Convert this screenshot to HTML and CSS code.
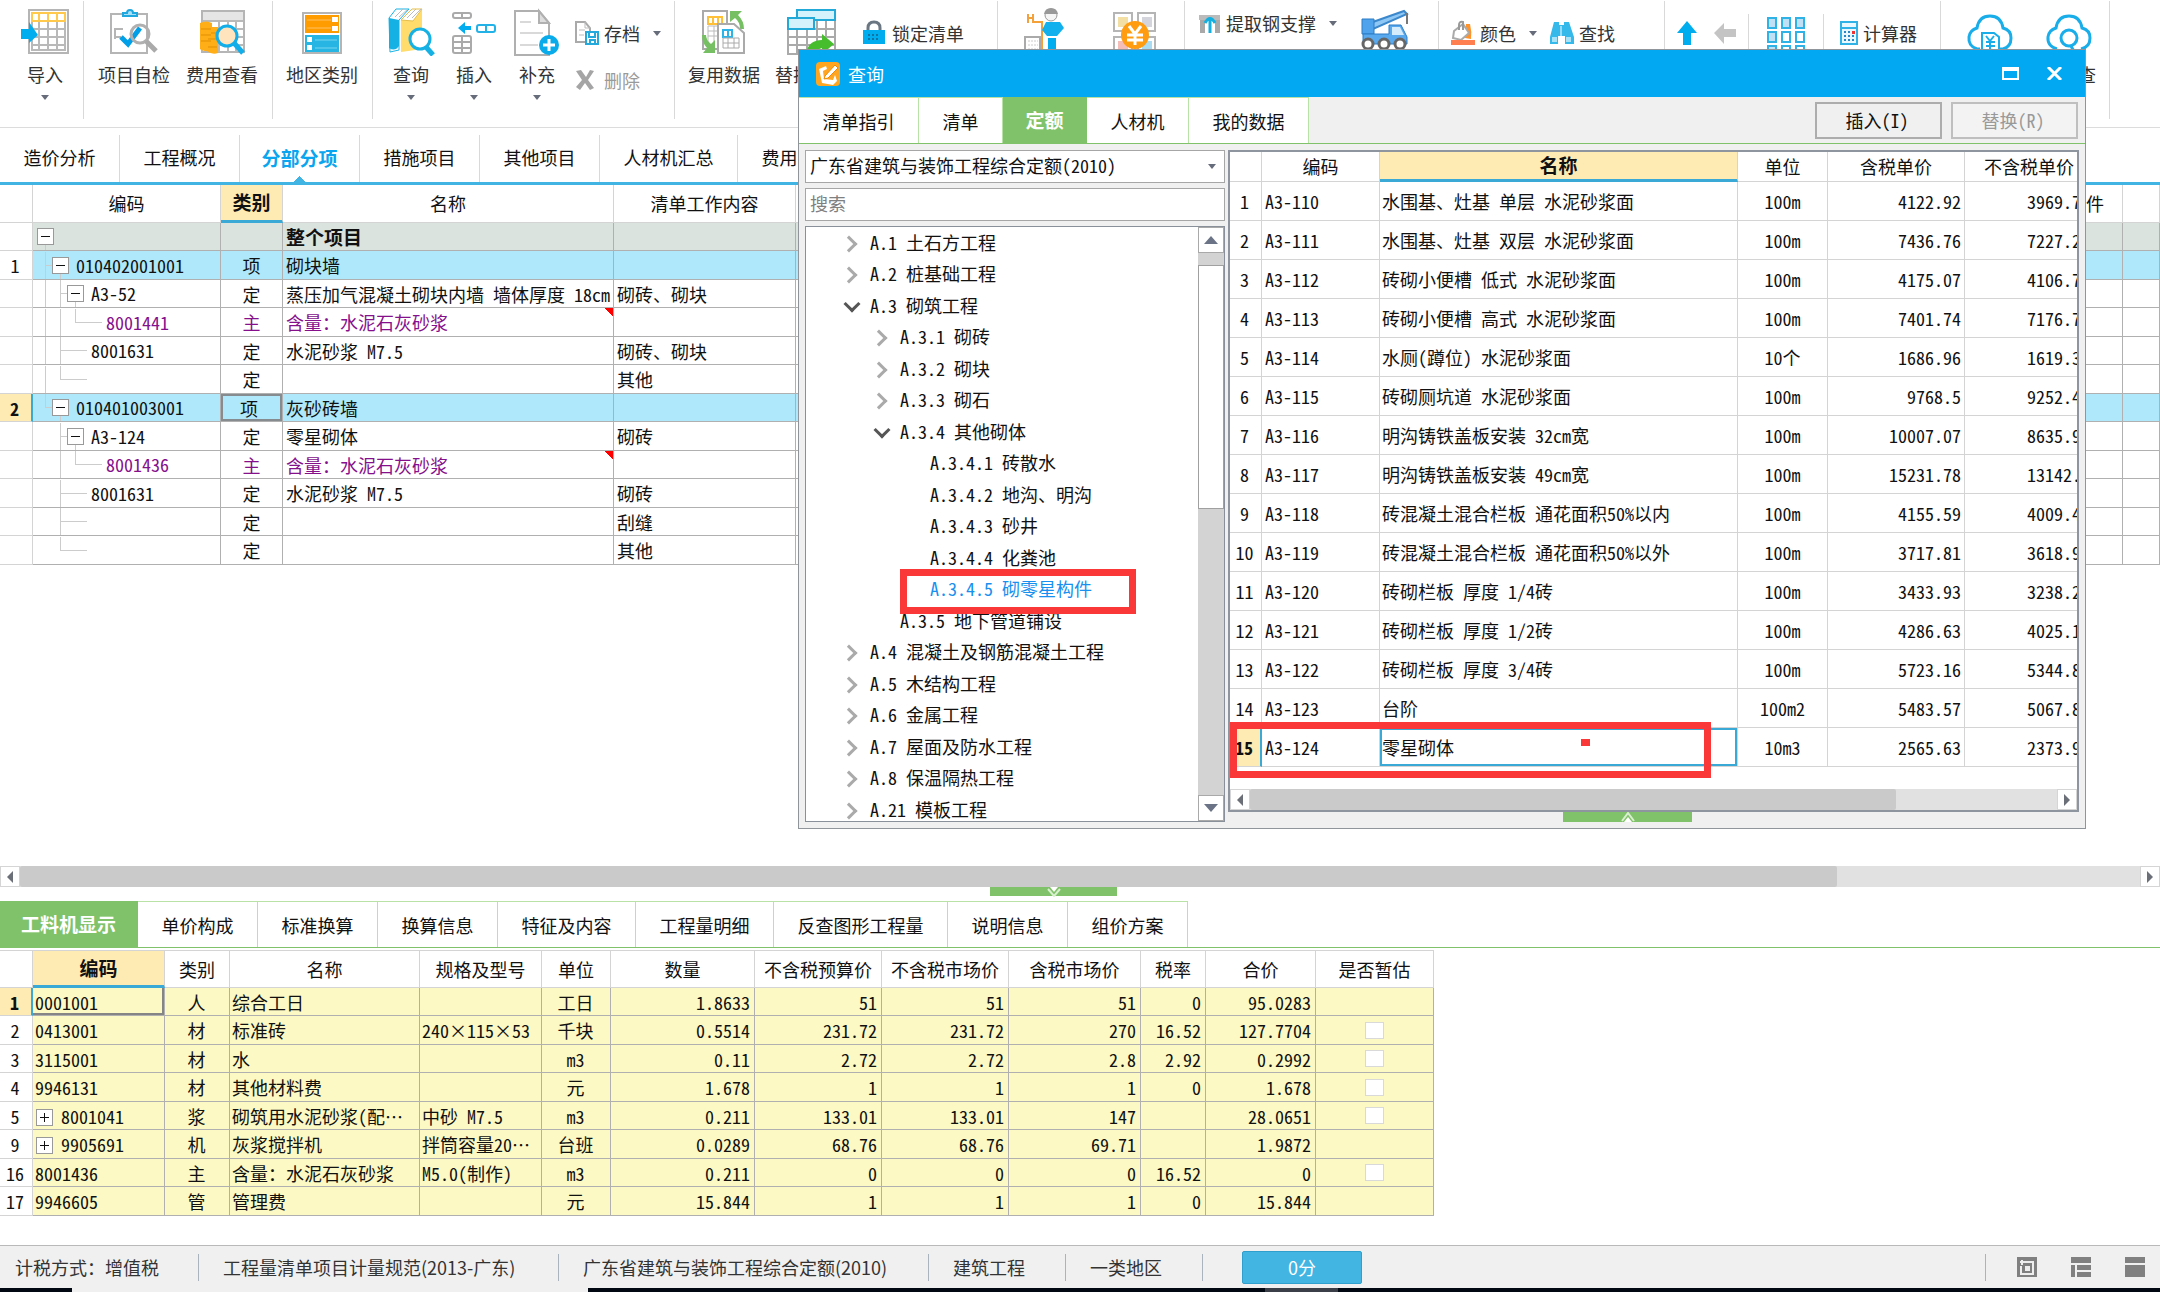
FILE: index.html
```html
<!DOCTYPE html>
<html lang="zh-CN">
<head>
<meta charset="utf-8">
<title>分部分项</title>
<link rel="stylesheet" href="styles.css">
</head>
<body>
<header class="toolbar">
  <div class="group g-import">
    <button class="tool narrow"><svg width="50" height="46" viewBox="0 0 50 46"><rect x="9" y="1" width="39" height="43" fill="#fff" stroke="#b5b5b5" stroke-width="2"/><path d="M12 12h33M12 20h33M12 28h33M12 36h33M19 12v29M28 12v29M37 12v29M12 12v29h33V12" fill="none" stroke="#b9b9b9" stroke-width="2"/><path d="M12 4h33v8H12zM19 4v8M28 4v8M37 4v8" fill="#fff" stroke="#ffc94d" stroke-width="2"/><path d="M1 20h8v-7l9 13-9 8v-4H1z" fill="#00aeef"/></svg><span>导入</span><i class="caret"></i></button>
  </div>
  <div class="group g-check">
    <button class="tool"><svg width="50" height="46" viewBox="0 0 50 46"><rect x="2" y="5" width="36" height="39" fill="#fff" stroke="#b5b5b5" stroke-width="2"/><path d="M14 7v-3h4a3 3 0 0 1 6 0h4v3z" fill="#a8e0f7" stroke="#1fa8e0" stroke-width="2"/><path d="M14 20H6v8h6M6 20v10" fill="none" stroke="#b5b5b5" stroke-width="2"/><path d="M12 28l7 7L31 19" fill="none" stroke="#009fe8" stroke-width="5"/><circle cx="31" cy="25" r="9" fill="none" stroke="#b0b0b0" stroke-width="3"/><path d="M37 32l10 10" stroke="#aaa" stroke-width="5"/></svg><span>项目自检</span></button>
    <button class="tool"><svg width="50" height="46" viewBox="0 0 50 46"><rect x="5" y="2" width="42" height="41" fill="#fff" stroke="#b5b5b5" stroke-width="2"/><path d="M6 3h40v8H6z" fill="#e4e5e4"/><path d="M6 12h40M14 20h32M14 28h32M14 36h32M22 12v31M31 12v31M39 12v31" stroke="#b9b9b9" stroke-width="2"/><path d="M3 14q6-3 12 0v4h6v26q-6 2-11-2-5 0-7-2z" fill="#ffae18"/><path d="M4 20h10M4 26h10M4 32h10M11 38h9M11 30h9M14 24h6" stroke="#e38f00" stroke-width="1"/><circle cx="30" cy="27" r="10" fill="#ffe4bd" stroke="#12aeea" stroke-width="3"/><path d="M37 34l9 10" stroke="#12aeea" stroke-width="5"/></svg><span>费用查看</span></button>
  </div>
  <div class="group g-region">
    <button class="tool"><svg width="42" height="46" viewBox="0 0 42 46"><rect x="2" y="4" width="38" height="40" fill="#fff" stroke="#b5b5b5" stroke-width="2"/><path d="M4 6h34v18H4z" fill="#ff9c00"/><path d="M6 11h24M6 19h24" stroke="#ffc163"/><path d="M31 8h6v5h-6zM31 17h6v5h-6z" fill="#fff"/><path d="M4 26h34v17H4z" fill="#27b5e4"/><path d="M14 31h22M14 39h22" stroke="#7ad5f0"/><path d="M6 28h5v5H6zM6 36h5v5H6z" fill="#fff"/></svg><span>地区类别</span></button>
  </div>
  <div class="group g-edit">
    <button class="tool narrow"><svg width="48" height="48" viewBox="0 0 48 48"><path d="M2 10L9 1h13L12 12v30l-9 2z" fill="#fff" stroke="#19b3e6"/><path d="M2 10l10 2v26q-4 6-10 2z" fill="#15b1e5"/><path d="M14 12L25 1h10v32l-7 9-14 2z" fill="#ffdc6b"/><path d="M14 12L25 1h10L26 13z" fill="#fff" stroke="#e4bf4b"/><path d="M12 9l9-8M8 9l8-8M20 10l9-9M25 10l9-9" stroke="#bbb"/><circle cx="33" cy="31" r="10" fill="#fff" stroke="#15b1e5" stroke-width="3"/><path d="M39 39l7 8" stroke="#15b1e5" stroke-width="5"/></svg><span>查询</span><i class="caret"></i></button>
    <button class="tool narrow"><svg width="48" height="48" viewBox="0 0 48 48"><g fill="#fff" stroke="#aaa" stroke-width="2"><rect x="3" y="5" width="18" height="5" rx="2"/><path d="M12 5v5"/><rect x="3" y="28" width="18" height="17" rx="2"/><path d="M3 34h18M3 40h18M12 28v17"/></g><path d="M21 18h-6v-4l-7 6 7 6v-4h6z" fill="#00aeef"/><rect x="27" y="17" width="18" height="7" rx="2" fill="#fff" stroke="#22b2e8" stroke-width="2"/><path d="M36 17v7" stroke="#22b2e8" stroke-width="2"/></svg><span>插入</span><i class="caret"></i></button>
    <button class="tool narrow"><svg width="48" height="48" viewBox="0 0 48 48"><path d="M2 3h24l10 12v32H2z" fill="#fff" stroke="#b0b0b0" stroke-width="2"/><path d="M26 3v12h10z" fill="#ddd" stroke="#b0b0b0" stroke-width="2"/><path d="M7 14h11M7 25h23M7 37h18" stroke="#d9d9d9" stroke-width="2"/><circle cx="36" cy="37" r="10" fill="#0aabea"/><path d="M30 37h12M36 31v12" stroke="#fff" stroke-width="3"/></svg><span>补充</span><i class="caret"></i></button>
    <div class="stack">
      <button class="small"><svg width="26" height="26" viewBox="0 0 26 26"><path d="M2 2h9l5 6v14H2z" fill="#fff" stroke="#aaa" stroke-width="2"/><path d="M11 2v6h5M5 10h6M5 15h5" fill="none" stroke="#bbb"/><path d="M12 12h12v12H12z" fill="#fff" stroke="#24a9dd" stroke-width="2"/><path d="M15 12v5h6v-5M16 24v-4h5v4" fill="none" stroke="#24a9dd" stroke-width="2"/></svg><span>存档</span><i class="caret"></i></button>
      <button class="small" disabled><svg width="26" height="26" viewBox="0 0 26 26"><path d="M2 4l5-1 5 7 4-7 4 1-6 9 6 8-4 2-5-7-5 7-4-3 6-7z" fill="#a5a5a5"/></svg><span>删除</span></button>
    </div>
  </div>
  <div class="group g-reuse">
    <button class="tool"><svg width="48" height="46" viewBox="0 0 48 46"><path d="M3 2h24v38H3z" fill="#fff" stroke="#aaa" stroke-width="2"/><path d="M8 8h14v7H8zM13 8v7M18 8v7" fill="none" stroke="#ffc038" stroke-width="2"/><path d="M8 17h14M8 22h12M8 27h12M8 17v16M14 17v16" stroke="#bbb"/><path d="M30 2h12l-4 4q6 6 6 14h-4q0-7-5-11l-5 4z" fill="#76bf62"/><path d="M2 26h4q0 5 5 9l4-4v13H3l4-5q-5-5-5-13z" fill="#76bf62"/><path d="M18 15h16l10 9v20H18z" fill="#fff" stroke="#aaa" stroke-width="2"/><path d="M23 21h9v7h-9zM28 21v7" fill="none" stroke="#2bb4e8" stroke-width="2"/><path d="M23 29h16v10H23zM23 34h16M28 29v10M34 29v10" fill="none" stroke="#aaa"/></svg><span>复用数据</span></button>
    <button class="tool"><svg width="50" height="46" viewBox="0 0 50 46"><path d="M2 28h47M2 36h47M2 20h47M2 14v31h24M11 20v25M21 20v25M31 12v30M40 12v30M49 12v30" fill="none" stroke="#aaa" stroke-width="2"/><path d="M11 1h38v10H11z" fill="#d4f2fb" stroke="#22a9d8" stroke-width="2"/><path d="M2 9h26v11H2z" fill="#d4f2fb" stroke="#22a9d8" stroke-width="2"/><path d="M20 45q2-14 16-14v-6l12 10-12 10v-6z" fill="#46bd2d"/></svg><span>替换数据</span></button>
    <button class="small lock"><svg width="26" height="26" viewBox="0 0 26 26"><path d="M6 12V8q0-6 6-6t6 6v4" fill="none" stroke="#6b7683" stroke-width="3"/><path d="M1 10h22v14H1z" fill="#00aeef"/><path d="M6 15h12M6 19h12" stroke="#1075a5" stroke-width="2" stroke-dasharray="2 2"/></svg><span>锁定清单</span></button>
  </div>
  <div class="group g-person">
    <button class="tool"><svg width="46" height="48" viewBox="0 0 46 48"><path d="M4 6v9M9 6v9M4 10h5" stroke="#f5a13a" stroke-width="2"/><path d="M10 14h8v8h8M18 20v24h-6" fill="none" stroke="#f5a13a" stroke-width="2"/><circle cx="27" cy="7" r="6" fill="#f5f5f5" stroke="#999"/><path d="M20 6q1-6 7-6t7 6z" fill="#999"/><path d="M22 14h14l4 6-7 8H23l-5-6z" fill="#12b0ed"/><path d="M24 30h8v13h6l-8 5-8-5h2z" fill="#00aeef"/><path d="M1 29h15v19H1z" fill="#fff" stroke="#aaa" stroke-width="2"/><path d="M4 33h10M4 37h10M4 41h10" stroke="#ccc" stroke-dasharray="2 1"/></svg></button>
    <button class="tool"><svg width="46" height="48" viewBox="0 0 46 48"><g fill="#fff" stroke="#b5b5b5" stroke-width="2"><path d="M2 5h18v18H2zM26 5h17v18H26zM2 29h18v18H2zM26 29h17v18H26z"/></g><path d="M6 9h10v10H6z" fill="#f3dfa3"/><path d="M30 9h10v10H30z" fill="#d4d4dc"/><path d="M6 33h10v14H6z" fill="#f5bdb8"/><path d="M30 33h10v14H30z" fill="#a9dcf2"/><circle cx="23" cy="27" r="14" fill="#ff9c10"/><path d="M17 18l6 8 6-8M15 27h16M15 32h16M23 26v11" fill="none" stroke="#fff" stroke-width="3"/></svg></button>
  </div>
  <div class="group g-steel">
    <button class="small high"><svg width="24" height="22" viewBox="0 0 24 22"><path d="M1 3h21v5H1z" fill="#bbb"/><path d="M2 8h5v13H2zM17 8h5v13h-5z" fill="#a9a9a9"/><path d="M12 6v15M7 11q5-9 10 0" fill="none" stroke="#12b0e0" stroke-width="3"/></svg><span>提取钢支撑</span><i class="caret"></i></button>
    <button class="tool"><svg width="50" height="44" viewBox="0 0 50 44"><path d="M10 13L44 1l3 3-34 15z" fill="#8fc8f5" stroke="#3c88cc" stroke-width="2"/><path d="M47 3v11" stroke="#777" stroke-width="2"/><path d="M2 9h12v15H2z" fill="#4ea3ec" stroke="#2d7dc4"/><path d="M3 24h26v-9h12l6 12v7H3z" fill="#59a9ee" stroke="#2d7dc4"/><path d="M32 17h8l4 8H32z" fill="#d5ecfd"/><g fill="#fff" stroke="#666" stroke-width="3"><circle cx="8" cy="34" r="5"/><circle cx="24" cy="34" r="5"/><circle cx="40" cy="34" r="5"/></g></svg></button>
  </div>
  <div class="group g-find">
    <button class="small"><svg width="26" height="26" viewBox="0 0 26 26"><path d="M16 4h4q2 8 1 15l-6-1z" fill="#ff9228"/><path d="M4 11l9-7 6 9-8 7-8-2z" fill="#fff" stroke="#aaa" stroke-width="2"/><path d="M9 10V5q0-4 4-3v8" fill="none" stroke="#999" stroke-width="2"/><path d="M1 20h24v5H1z" fill="#ff7f50"/></svg><span>颜色</span><i class="caret"></i></button>
    <button class="small"><svg width="26" height="26" viewBox="0 0 26 26"><path d="M5 2h5v3h5V2h5l5 15v7h-9v-8h-7v8H1v-7z" fill="#35b8ea"/><path d="M3 17h5v5H3zM17 17h5v5h-5z" fill="#a7e3f8"/><path d="M12 6v10" stroke="#fff"/></svg><span>查找</span></button>
  </div>
  <div class="group short g-arrows">
    <button class="small" aria-label="上移"><svg width="24" height="26" viewBox="0 0 24 26"><path d="M12 1l10 12h-6v12H8V13H2z" fill="#00aeef"/></svg></button>
    <button class="small" aria-label="升级"><svg width="24" height="26" viewBox="0 0 24 26"><path d="M1 13L11 3v6h12v8H11v7z" fill="#c4c4c4"/></svg></button>
  </div>
  <div class="group short g-grid">
    <button class="tool narrow"><svg width="40" height="42" viewBox="0 0 40 42"><g fill="#bfe0f5" stroke="#2fb2e6" stroke-width="2"><path d="M2 5h8v10H2zM16 5h8v10h-8zM30 5h8v10h-8zM2 19h8v10H2zM2 33h8v9H2z"/><path d="M16 19h8v10h-8zM30 19h8v10h-8zM16 33h8v9h-8zM30 33h8v9h-8z" fill="#fff"/></g></svg></button>
  </div>
  <div class="group g-calc">
    <button class="small"><svg width="20" height="26" viewBox="0 0 20 26"><rect x="2" y="2" width="16" height="22" fill="#e9f8fe" stroke="#2fb2e6" stroke-width="2"/><path d="M2 8h16" stroke="#2fb2e6" stroke-width="2"/><path d="M5 12h10M5 16h10M5 20h10" stroke="#2687c4" stroke-width="2" stroke-dasharray="2 2"/><path d="M13 11h3v3h-3z" fill="#e33"/></svg><span>计算器</span></button>
  </div>
  <div class="group g-cloud">
    <button class="tool narrow"><svg width="48" height="46" viewBox="0 0 48 46"><path d="M14 40H11Q2 37 3 28q1-7 8-9Q13 7 24 7q11 0 13 12 8 2 8 10 0 9-8 11h-3" fill="none" stroke="#19aeea" stroke-width="3"/><path d="M16 24h12l5 4v14H16z" fill="#fff" stroke="#19aeea" stroke-width="2"/><path d="M20 27l4 5 4-5M20 33h9M20 37h9M24 32v8" fill="none" stroke="#19aeea" stroke-width="2"/></svg></button>
    <button class="tool narrow"><svg width="48" height="46" viewBox="0 0 48 46"><path d="M12 40Q2 37 3 28q1-7 8-9Q13 7 24 7q11 0 13 12 8 2 8 10 0 9-9 11" fill="none" stroke="#19aeea" stroke-width="3"/><circle cx="24" cy="29" r="8" fill="none" stroke="#19aeea" stroke-width="3"/><path d="M26 37l5 9" stroke="#19aeea" stroke-width="3"/></svg><span>云检查</span></button>
  </div>
</header>
<nav class="maintabs">
  <a href="#">造价分析</a><a href="#">工程概况</a><a href="#" class="active">分部分项</a><a href="#">措施项目</a><a href="#">其他项目</a><a href="#" class="wide">人材机汇总</a><a href="#">费用汇总</a>
</nav>

<main class="workspace">
  <table class="grid bill">
    <colgroup><col class="w33"><col class="w188"><col class="w62"><col class="w331"><col class="w182"><col><col class="w37"></colgroup>
    <thead><tr><th></th><th>编码</th><th class="sel">类别</th><th>名称</th><th>清单工作内容</th><th class="tail">件</th><th></th></tr></thead>
    <tbody>
      <tr class="total"><td></td><td><div class="tree"><span class="g down"><button class="toggle" aria-label="折叠"></button></span></div></td><td></td><td>整个项目</td><td></td><td></td><td></td></tr>
      <tr class="item"><td>1</td><td><div class="tree"><span class="g tee"></span><span class="g down"><button class="toggle" aria-label="折叠"></button></span><span class="code">010402001001</span></div></td><td>项</td><td>砌块墙</td><td></td><td></td><td></td></tr>
      <tr><td></td><td><div class="tree"><span class="g bar"></span><span class="g tee"></span><span class="g down"><button class="toggle" aria-label="折叠"></button></span><span class="code">A3-52</span></div></td><td>定</td><td>蒸压加气混凝土砌块内墙 墙体厚度 18cm</td><td>砌砖、砌块</td><td></td><td></td></tr>
      <tr class="main-mat"><td></td><td><div class="tree"><span class="g bar"></span><span class="g bar"></span><span class="g elbow"></span><span class="stub"></span>8001441</div></td><td>主</td><td class="note">含量：水泥石灰砂浆</td><td></td><td></td><td></td></tr>
      <tr><td></td><td><div class="tree"><span class="g bar"></span><span class="g tee"></span><span class="stub"></span>8001631</div></td><td>定</td><td>水泥砂浆 M7.5</td><td>砌砖、砌块</td><td></td><td></td></tr>
      <tr><td></td><td><div class="tree"><span class="g bar"></span><span class="g elbow"></span><span class="stub"></span></div></td><td>定</td><td></td><td>其他</td><td></td><td></td></tr>
      <tr class="item"><td class="cur">2</td><td><div class="tree"><span class="g elbow"></span><span class="g down"><button class="toggle" aria-label="折叠"></button></span><span class="code">010401003001</span></div></td><td class="focus">项</td><td>灰砂砖墙</td><td></td><td></td><td></td></tr>
      <tr><td></td><td><div class="tree"><span class="g"></span><span class="g tee"></span><span class="g down"><button class="toggle" aria-label="折叠"></button></span><span class="code">A3-124</span></div></td><td>定</td><td>零星砌体</td><td>砌砖</td><td></td><td></td></tr>
      <tr class="main-mat"><td></td><td><div class="tree"><span class="g"></span><span class="g bar"></span><span class="g elbow"></span><span class="stub"></span>8001436</div></td><td>主</td><td class="note">含量：水泥石灰砂浆</td><td></td><td></td><td></td></tr>
      <tr><td></td><td><div class="tree"><span class="g"></span><span class="g tee"></span><span class="stub"></span>8001631</div></td><td>定</td><td>水泥砂浆 M7.5</td><td>砌砖</td><td></td><td></td></tr>
      <tr><td></td><td><div class="tree"><span class="g"></span><span class="g tee"></span><span class="stub"></span></div></td><td>定</td><td></td><td>刮缝</td><td></td><td></td></tr>
      <tr><td></td><td><div class="tree"><span class="g"></span><span class="g elbow"></span><span class="stub"></span></div></td><td>定</td><td></td><td>其他</td><td></td><td></td></tr>
    </tbody>
  </table>
</main>

<div class="hscroll">
  <button aria-label="向左"><svg width="8" height="12" viewBox="0 0 8 12"><path d="M7 0v12L1 6z" fill="#6b6f78"/></svg></button>
  <div class="track"><div class="thumb main-thumb"></div></div>
  <button aria-label="向右"><svg width="8" height="12" viewBox="0 0 8 12"><path d="M1 0v12l6-6z" fill="#6b6f78"/></svg></button>
</div>

<section class="detail">
  <button class="fold fold-down" aria-label="收起"><svg width="16" height="10" viewBox="0 0 16 10"><path d="M4 0h8L8 5z" fill="#fff"/><path d="M2 2l6 7 6-7" fill="none" stroke="#d9f0d0" stroke-width="2"/></svg></button>
  <nav class="greentabs detail-tabs">
    <a href="#" class="active w138">工料机显示</a><a href="#" class="w120">单价构成</a><a href="#" class="w120">标准换算</a><a href="#" class="w120">换算信息</a><a href="#" class="w138">特征及内容</a><a href="#" class="w138">工程量明细</a><a href="#" class="w174">反查图形工程量</a><a href="#" class="w120">说明信息</a><a href="#" class="w120">组价方案</a>
  </nav>
  <table class="grid mats">
    <colgroup><col class="w33"><col class="w132"><col class="w65"><col class="w190"><col class="w122"><col class="w69"><col class="w144"><col class="w127"><col class="w127"><col class="w132"><col class="w65"><col class="w110"><col class="w118"></colgroup>
    <thead><tr><th></th><th class="sel">编码</th><th>类别</th><th>名称</th><th>规格及型号</th><th>单位</th><th>数量</th><th>不含税预算价</th><th>不含税市场价</th><th>含税市场价</th><th>税率</th><th>合价</th><th>是否暂估</th></tr></thead>
    <tbody>
      <tr><td class="cur">1</td><td class="focus">0001001</td><td>人</td><td>综合工日</td><td></td><td>工日</td><td>1.8633</td><td>51</td><td>51</td><td>51</td><td>0</td><td>95.0283</td><td></td></tr>
      <tr><td>2</td><td>0413001</td><td>材</td><td>标准砖</td><td>240×115×53</td><td>千块</td><td>0.5514</td><td>231.72</td><td>231.72</td><td>270</td><td>16.52</td><td>127.7704</td><td><input type="checkbox" aria-label="是否暂估"></td></tr>
      <tr><td>3</td><td>3115001</td><td>材</td><td>水</td><td></td><td>m3</td><td>0.11</td><td>2.72</td><td>2.72</td><td>2.8</td><td>2.92</td><td>0.2992</td><td><input type="checkbox" aria-label="是否暂估"></td></tr>
      <tr><td>4</td><td>9946131</td><td>材</td><td>其他材料费</td><td></td><td>元</td><td>1.678</td><td>1</td><td>1</td><td>1</td><td>0</td><td>1.678</td><td><input type="checkbox" aria-label="是否暂估"></td></tr>
      <tr><td>5</td><td><button class="toggle plus lead" aria-label="展开"></button>8001041</td><td>浆</td><td>砌筑用水泥砂浆(配…</td><td>中砂 M7.5</td><td>m3</td><td>0.211</td><td>133.01</td><td>133.01</td><td>147</td><td></td><td>28.0651</td><td><input type="checkbox" aria-label="是否暂估"></td></tr>
      <tr><td>9</td><td><button class="toggle plus lead" aria-label="展开"></button>9905691</td><td>机</td><td>灰浆搅拌机</td><td>拌筒容量20…</td><td>台班</td><td>0.0289</td><td>68.76</td><td>68.76</td><td>69.71</td><td></td><td>1.9872</td><td></td></tr>
      <tr><td>16</td><td>8001436</td><td>主</td><td>含量：水泥石灰砂浆</td><td>M5.0(制作)</td><td>m3</td><td>0.211</td><td>0</td><td>0</td><td>0</td><td>16.52</td><td>0</td><td><input type="checkbox" aria-label="是否暂估"></td></tr>
      <tr><td>17</td><td>9946605</td><td>管</td><td>管理费</td><td></td><td>元</td><td>15.844</td><td>1</td><td>1</td><td>1</td><td>0</td><td>15.844</td><td></td></tr>
    </tbody>
  </table>
</section>

<footer class="status">
  <span class="s1">计税方式：增值税</span><span class="s2">工程量清单项目计量规范(2013-广东)</span><span class="s3">广东省建筑与装饰工程综合定额(2010)</span><span class="s4">建筑工程</span><span class="s4">一类地区</span>
  <button class="score">0分</button>
  <div class="views">
    <button aria-label="视图一"><svg width="20" height="20" viewBox="0 0 20 20"><path d="M0 0h20v20H0z" fill="#808080"/><path d="M8 5h8v12H4V9M3 5h5M5 3v5" fill="none" stroke="#eee" stroke-width="2"/><path d="M8 9h5v5H8z" fill="#eee"/></svg></button>
    <button aria-label="视图二"><svg width="20" height="20" viewBox="0 0 20 20"><path d="M0 0h20v6H0zM0 8h4v12H0zM6 8h14v5H6zM6 15h14v5H6z" fill="#808080"/></svg></button>
    <button aria-label="视图三"><svg width="20" height="20" viewBox="0 0 20 20"><path d="M0 0h20v6H0zM0 8h20v12H0z" fill="#808080"/></svg></button>
  </div>
</footer>
<div class="edge"></div>

<div class="dialog" role="dialog" aria-label="查询">
  <div class="titlebar">
    <svg width="24" height="24" viewBox="0 0 24 24"><rect width="24" height="24" rx="4" fill="#ffa51f"/><path d="M3 7l7-3 1 3-4 2 1 8 9 1 2-5 2 6-4 4-11-2z" fill="#fff"/><path d="M9 14l10-11 3 3-10 10-4 1z" fill="#fff" stroke="#f08a00"/></svg>
    <span class="title">查询</span>
    <button aria-label="最大化"><svg width="17" height="13" viewBox="0 0 17 13"><path d="M1 1h15v11H1z" fill="none" stroke="#fff" stroke-width="2"/><path d="M1 2h15v2H1z" fill="#fff"/></svg></button>
    <button aria-label="关闭"><svg width="17" height="13" viewBox="0 0 17 13"><path d="M2 0l13 13M15 0L2 13" stroke="#fff" stroke-width="3"/></svg></button>
  </div>
  <div class="dialog-top">
    <nav class="greentabs"><a href="#" class="w120">清单指引</a><a href="#" class="w84">清单</a><a href="#" class="active w84">定额</a><a href="#" class="w102">人材机</a><a href="#" class="w120">我的数据</a></nav>
    <button class="action">插入(I)</button><button class="action" disabled>替换(R)</button>
  </div>
  <div class="dialog-body">
    <div class="picker">
      <div class="combo"><select aria-label="定额库"><option>广东省建筑与装饰工程综合定额(2010)</option></select></div>
      <input class="search" type="text" placeholder="搜索" aria-label="搜索">
      <div class="treebox">
        <ul>
          <li class="shut">A.1 土石方工程</li>
          <li class="shut">A.2 桩基础工程</li>
          <li class="open">A.3 砌筑工程</li>
          <li class="shut l2">A.3.1 砌砖</li>
          <li class="shut l2">A.3.2 砌块</li>
          <li class="shut l2">A.3.3 砌石</li>
          <li class="open l2">A.3.4 其他砌体</li>
          <li class="l3">A.3.4.1 砖散水</li>
          <li class="l3">A.3.4.2 地沟、明沟</li>
          <li class="l3">A.3.4.3 砂井</li>
          <li class="l3">A.3.4.4 化粪池</li>
          <li class="l3 picked">A.3.4.5 砌零星构件</li>
          <li class="l2">A.3.5 地下管道铺设</li>
          <li class="shut">A.4 混凝土及钢筋混凝土工程</li>
          <li class="shut">A.5 木结构工程</li>
          <li class="shut">A.6 金属工程</li>
          <li class="shut">A.7 屋面及防水工程</li>
          <li class="shut">A.8 保温隔热工程</li>
          <li class="shut">A.21 模板工程</li>
        </ul>
        <div class="vscroll">
          <button aria-label="向上"><svg width="14" height="8" viewBox="0 0 14 8"><path d="M0 8h14L7 0z" fill="#6a7486"/></svg></button>
          <div class="vtrack"><div class="vthumb"></div></div>
          <button aria-label="向下"><svg width="14" height="8" viewBox="0 0 14 8"><path d="M0 0h14L7 8z" fill="#6a7486"/></svg></button>
        </div>
      </div>
    </div>
    <div class="result">
      <div class="result-box">
        <div class="clip">
        <table class="grid quota">
          <colgroup><col class="w32"><col class="w118"><col><col class="w90"><col class="w137"><col class="w112"></colgroup>
          <thead><tr><th></th><th>编码</th><th class="sel">名称</th><th>单位</th><th>含税单价</th><th class="last">不含税单价</th></tr></thead>
          <tbody>
            <tr><td>1</td><td>A3-110</td><td>水围基、灶基 单层 水泥砂浆面</td><td>100m</td><td>4122.92</td><td>3969.7</td></tr>
            <tr><td>2</td><td>A3-111</td><td>水围基、灶基 双层 水泥砂浆面</td><td>100m</td><td>7436.76</td><td>7227.2</td></tr>
            <tr><td>3</td><td>A3-112</td><td>砖砌小便槽 低式 水泥砂浆面</td><td>100m</td><td>4175.07</td><td>4106.7</td></tr>
            <tr><td>4</td><td>A3-113</td><td>砖砌小便槽 高式 水泥砂浆面</td><td>100m</td><td>7401.74</td><td>7176.7</td></tr>
            <tr><td>5</td><td>A3-114</td><td>水厕(蹲位) 水泥砂浆面</td><td>10个</td><td>1686.96</td><td>1619.3</td></tr>
            <tr><td>6</td><td>A3-115</td><td>砖砌厕坑道 水泥砂浆面</td><td>100m</td><td>9768.5</td><td>9252.4</td></tr>
            <tr><td>7</td><td>A3-116</td><td>明沟铸铁盖板安装 32cm宽</td><td>100m</td><td>10007.07</td><td>8635.9</td></tr>
            <tr><td>8</td><td>A3-117</td><td>明沟铸铁盖板安装 49cm宽</td><td>100m</td><td>15231.78</td><td>13142.</td></tr>
            <tr><td>9</td><td>A3-118</td><td>砖混凝土混合栏板 通花面积50%以内</td><td>100m</td><td>4155.59</td><td>4009.4</td></tr>
            <tr><td>10</td><td>A3-119</td><td>砖混凝土混合栏板 通花面积50%以外</td><td>100m</td><td>3717.81</td><td>3618.9</td></tr>
            <tr><td>11</td><td>A3-120</td><td>砖砌栏板 厚度 1/4砖</td><td>100m</td><td>3433.93</td><td>3238.2</td></tr>
            <tr><td>12</td><td>A3-121</td><td>砖砌栏板 厚度 1/2砖</td><td>100m</td><td>4286.63</td><td>4025.1</td></tr>
            <tr><td>13</td><td>A3-122</td><td>砖砌栏板 厚度 3/4砖</td><td>100m</td><td>5723.16</td><td>5344.8</td></tr>
            <tr><td>14</td><td>A3-123</td><td>台阶</td><td>100m2</td><td>5483.57</td><td>5067.8</td></tr>
            <tr><td class="cur">15</td><td>A3-124</td><td class="focus">零星砌体</td><td>10m3</td><td>2565.63</td><td>2373.9</td></tr>
          </tbody>
        </table>
        </div>
        <div class="hscroll">
          <button aria-label="向左"><svg width="8" height="12" viewBox="0 0 8 12"><path d="M7 0v12L1 6z" fill="#6b6f78"/></svg></button>
          <div class="track"><div class="thumb quota-thumb"></div></div>
          <button aria-label="向右"><svg width="8" height="12" viewBox="0 0 8 12"><path d="M1 0v12l6-6z" fill="#6b6f78"/></svg></button>
        </div>
      </div>
      <button class="fold" aria-label="展开"><svg width="16" height="10" viewBox="0 0 16 10"><path d="M4 10h8L8 5z" fill="#fff"/><path d="M2 9l6-8 6 8" fill="none" stroke="#d9f0d0" stroke-width="2"/></svg></button>
    </div>
  </div>
  <div class="mark mark-tree"></div>
  <div class="mark mark-row"></div>
  <div class="mark-dot"></div>
</div>
</body>
</html>
```
FILE: styles.css
```css
* { box-sizing: border-box; }
body {
  margin: 0;
  min-height: 100vh;
  display: flex;
  flex-direction: column;
  position: relative;
  overflow-x: hidden;
  background: #fff;
  color: #111;
  font: 18px/24px "Noto Sans Mono CJK SC", "Noto Sans CJK SC", sans-serif;
}
button, input, select { font: inherit; color: inherit; margin: 0; padding: 0; }
button { background: none; border: 0; }
a { color: inherit; text-decoration: none; }
svg { display: block; flex: none; }

/* toolbar */
.toolbar {
  display: flex;
  height: 128px;
  padding-top: 1px;
  border-bottom: 1px solid #dcdcdc;
  color: #333;
  font-family: "Noto Sans CJK SC", sans-serif;
}
.group {
  display: flex;
  align-items: flex-start;
  flex: none;
  height: 118px;
  padding-top: 7px;
  border-right: 1px solid #d9d9d9;
}
.tool { display: flex; flex-direction: column; align-items: center; width: 72px; white-space: nowrap; }
.tool.narrow { width: 48px; }
.tool svg { height: 48px; }
.tool span { margin-top: 6px; }
.caret { width: 0; height: 0; border: 4px solid transparent; border-top: 5px solid #676c7a; border-bottom: 0; }
.tool .caret { margin-top: 9px; }
.small { display: flex; align-items: center; gap: 4px; height: 26px; margin-top: 12px; white-space: nowrap; }
.small .caret { margin-left: 9px; }
.small:disabled { color: #9a9a9a; }
.small.high { margin-top: 2px; }
.stack { display: flex; flex-direction: column; gap: 9px; margin-left: -2px; }
.g-import { width: 84px; padding-left: 21px; }
.g-check { width: 189px; padding-left: 14px; gap: 16px; }
.g-region { width: 100px; padding-left: 13px; }
.g-edit { width: 302px; padding-left: 14px; gap: 15px; }
.g-reuse { width: 323px; padding-left: 13px; gap: 15px; }
.g-person { width: 187px; padding-left: 13px; gap: 16px; }
.g-steel { width: 254px; padding-left: 13px; gap: 12px; }
.g-find { width: 226px; padding-left: 11px; gap: 12px; }
.short { height: 105px; margin-top: 13px; padding-top: 0; }
.short .small { margin-top: 6px; }
.short .tool { margin-top: -4px; }
.g-arrows { width: 84px; padding-left: 10px; gap: 14px; }
.g-grid { width: 75px; padding-left: 13px; }
.g-calc { width: 117px; padding-left: 15px; }
.g-cloud { width: 169px; padding-left: 25px; gap: 31px; }

.maintabs { display: flex; height: 57px; padding-top: 7px; border-bottom: 3px solid #42b4e3; font-family: "Noto Sans CJK SC", sans-serif; }
.maintabs a { width: 120px; flex: none; text-align: center; line-height: 45px; border-right: 1px solid #d9d9d9; }
.maintabs a.wide { width: 138px; }
.maintabs a.active {
  color: #0aa5ee;
  font-weight: bold;
  font-size: 19px;
  background: linear-gradient(to bottom right, transparent 50%, #42b4e3 50%) no-repeat 54px 100% / 6px 6px,
    linear-gradient(to bottom left, transparent 50%, #42b4e3 50%) no-repeat 60px 100% / 6px 6px;
}

/* tables */
.grid { border-collapse: separate; border-spacing: 0; table-layout: fixed; }
.grid th { font-weight: normal; padding: 0 0 1px; border-right: 1px solid #d4d4d4; border-bottom: 1px solid #d4d4d4; white-space: nowrap; }
.grid th.sel { font-weight: bold; font-size: 19px; background: #feebb4; border-bottom: 3px solid #3aa9d6; }
.grid td { padding: 0 3px; border-right: 1px solid #b0b0b0; border-bottom: 1px solid #b0b0b0; white-space: nowrap; line-height: 24px; }
.grid td:first-child { text-align: center; padding: 0 2px 0 0; background: #fff; border-color: #d4d4d4; }
.grid td.cur, .grid td.cur:first-child { font-weight: bold; background: #feebb4; border-right: 2px solid #3aa9d6; }
.bill { width: 100%; }
.bill thead tr { height: 38px; }
.bill th { padding-bottom: 2px; }
.bill th.tail { text-align: right; padding-right: 18px; }
.bill tbody tr, .mats tbody tr { height: 28px; }
.bill tbody tr:nth-child(even), .mats tbody tr:nth-child(even) { height: 29px; }
.bill td:nth-child(3) { text-align: center; }
.bill td:nth-child(2) { padding: 0 0 0 5px; }
.total td { background: #dae3de; font-weight: bold; font-size: 19px; }
.item td { background: #aee8fa; }
.main-mat td { color: #86108c; }
.bill td.note { background: linear-gradient(to bottom left, #f00 50%, transparent 50%) no-repeat right top / 9px 8px; }
.bill td.focus { box-shadow: inset 0 0 0 2px #858b8e; padding-right: 8px; }
.w32 { width: 32px; } .w33 { width: 33px; } .w37 { width: 37px; } .w62 { width: 62px; } .w65 { width: 65px; }
.w69 { width: 69px; } .w84 { width: 84px; } .w90 { width: 90px; } .w102 { width: 102px; } .w110 { width: 110px; }
.w112 { width: 112px; } .w118 { width: 118px; } .w120 { width: 120px; } .w122 { width: 122px; }
.w127 { width: 127px; } .w132 { width: 132px; } .w137 { width: 137px; } .w138 { width: 138px; }
.w144 { width: 144px; } .w174 { width: 174px; } .w182 { width: 182px; } .w188 { width: 188px; } .w190 { width: 190px; } .w331 { width: 331px; }

.tree { display: flex; height: 27px; line-height: 27px; }
.g { width: 15px; flex: none; display: flex; justify-content: center; align-items: center; background-repeat: no-repeat; }
.bar, .tee, .elbow, .down { background-image: linear-gradient(#ccc, #ccc), linear-gradient(#ccc, #ccc); }
.bar { background-position: 7px 0; background-size: 1px 100%; }
.tee { background-position: 7px 0, 7px 13px; background-size: 1px 100%, 8px 1px; }
.elbow { background-position: 7px 0, 7px 13px; background-size: 1px 14px, 8px 1px; }
.down { background-position: 7px 13px; background-size: 1px 100%; }
.stub { width: 19px; height: 1px; margin: 13px 4px 0 0; background: #ccc; flex: none; }
.code { margin-left: 8px; }
.toggle {
  width: 17px;
  height: 17px;
  flex: none;
  border: 1px solid #999;
  background: #fff linear-gradient(#111, #111) no-repeat center / 9px 1px;
}
.toggle.plus { background-image: linear-gradient(#111, #111), linear-gradient(#111, #111); background-size: 9px 1px, 1px 9px; }
.toggle.lead { margin: 0 8px 0 1px; vertical-align: -1px; }

.workspace { flex: 1 0 auto; }

/* scrollbars */
.hscroll { display: flex; height: 21px; flex: none; background: #e1e1e1; }
.hscroll button { width: 20px; background: #fff; border: 1px solid #d5d5d5; display: flex; align-items: center; justify-content: center; }
.track { flex: 1; display: flex; }
.track::after { content: ""; flex: 1; }
.thumb { background: #cacaca; border-radius: 2px; }
.main-thumb { flex: 6; }
.quota-thumb { flex: 4; }
.vscroll { width: 26px; flex: none; display: flex; flex-direction: column; background: #d3d3d3; }
.vscroll button { height: 26px; background: #fff; border: 1px solid #a9a9a9; display: flex; align-items: center; justify-content: center; }
.vtrack { flex: 1; padding-top: 12px; }
.vthumb { height: 46%; background: #fff; border: 1px solid #a0a0a0; }

/* lower panel */
.detail { padding-bottom: 29px; }
.fold { display: flex; justify-content: center; width: 129px; height: 10px; background: #80c269; }
.fold-down { width: 127px; margin-left: 990px; height: 9px; }
.greentabs { display: flex; }
.greentabs a { height: 46px; flex: none; line-height: 46px; text-align: center; background: #fff; border-top: 1px solid #b9e3a6; border-right: 1px solid #b9e3a6; }
.greentabs a.active { background: #80c269; color: #fff; font-weight: bold; font-size: 19px; line-height: 44px; border-color: #80c269; }
.detail-tabs { margin-top: 5px; border-bottom: 1px solid #80c269; }
.mats { width: 1434px; margin-top: 2px; border-top: 1px solid #d4d4d4; }
.mats thead tr { height: 37px; }
.mats td { background: #fcf9c4; text-align: right; padding-right: 4px; }
.mats td:nth-child(2), .mats td:nth-child(4), .mats td:nth-child(5) { text-align: left; padding-left: 2px; }
.mats td:nth-child(3), .mats td:nth-child(6), .mats td:last-child { text-align: center; }
.mats td.focus { box-shadow: inset -2px -2px 0 #858585; }
input[type="checkbox"] { appearance: none; display: block; width: 19px; height: 17px; margin: 0 auto; background: #fff; border: 1px solid #d9d9d9; }

/* status bar */
.status { display: flex; align-items: center; height: 43px; flex: none; background: #f0f0f0; border-top: 1px solid #b9b9b9; color: #333; font-family: "Noto Sans CJK SC", sans-serif; white-space: nowrap; }
.status span { line-height: 27px; padding: 0 24px; border-right: 1px solid #a9b4bd; }
.status .s1 { width: 199px; padding-left: 15px; }
.status .s2 { width: 360px; }
.status .s3 { width: 370px; }
.status .s4 { width: 137px; }
.score { width: 120px; height: 33px; margin-left: 39px; background: #43b5e3; border: 1px solid #2f9fcd; border-radius: 2px; color: #fff; }
.views { display: flex; align-items: center; gap: 34px; height: 27px; margin-left: auto; padding: 0 15px 0 31px; border-left: 1px solid #a9b4bd; }
.edge { height: 4px; flex: none; background: linear-gradient(90deg, #020812 72px, #f0f0f0 72px, #f0f0f0 588px, #020812 588px, #020812 1265px, #3b3f48 1265px, #3b3f48 1338px, #020812 1338px); }

/* floating window */
.dialog { position: absolute; top: 49px; left: 798px; right: 74px; background: #f0f0f0; border: 1px solid #8f959b; }
.titlebar { display: flex; align-items: center; height: 47px; padding: 0 22px 0 17px; background: #02a8f2; color: #fff; font-family: "Noto Sans CJK SC", sans-serif; }
.title { flex: 1; margin-left: 8px; }
.titlebar button { margin-left: 27px; }
.dialog-top { display: flex; align-items: center; gap: 9px; height: 47px; border-bottom: 1px solid #80c269; padding-right: 7px; }
.dialog-top nav { flex: 1; }
.action { width: 127px; height: 37px; border: 2px solid #adadad; background: #f0f0f0; padding-right: 3px; }
.action:disabled { border-color: #bfbfbf; color: #999; background: #f3f3f3; }
.dialog-body { display: flex; gap: 3px; padding: 6px; }
.picker { width: 420px; flex: none; display: flex; flex-direction: column; gap: 5px; }
.combo { position: relative; }
.combo::after { content: ""; position: absolute; right: 9px; top: 14px; border: 4px solid transparent; border-top: 5px solid #676c7a; border-bottom: 0; }
.combo select, .search { display: block; width: 100%; height: 33px; background: #fff; border: 1px solid #a6a6a6; border-radius: 0; padding: 0 4px 3px; appearance: none; }
.search::placeholder { color: #808080; opacity: 1; }
.treebox { display: flex; height: 596px; background: #fff; border: 1px solid #8a909a; overflow: hidden; }
.treebox ul { flex: 1; margin: 0; padding: 0 0 0 36px; list-style: none; }
.treebox li { height: 31px; line-height: 31px; padding-left: 28px; white-space: nowrap; }
.treebox li:nth-child(even) { height: 32px; }
.treebox li.l2 { margin-left: 30px; }
.treebox li.l3 { margin-left: 60px; }
.treebox li.picked { color: #1890f0; }
.treebox li::before { content: ""; float: left; width: 9px; height: 9px; margin: 11px 0 0 -27px; }
.treebox li.shut::before { border-top: 3px solid #aaa; border-right: 3px solid #aaa; transform: rotate(45deg); }
.treebox li.open::before { border-bottom: 3px solid #555; border-right: 3px solid #555; transform: rotate(45deg); margin-left: -24px; margin-top: 8px; }
.result { flex: 1; min-width: 0; display: flex; flex-direction: column; align-items: flex-start; }
.result-box { width: 100%; background: #fff; border: 2px solid #8f959f; }
.clip { overflow: hidden; height: 637px; }
.quota { width: 100%; }
.quota thead tr { height: 30px; }
.quota tbody tr { height: 39px; }
.quota td { border-color: #d4d4d4; }
.quota td:nth-child(3) { padding-left: 2px; }
.quota td:nth-child(4) { text-align: center; }
.quota td:nth-child(5) { text-align: right; }
.quota td:nth-child(6) { padding: 0 0 0 62px; border-right: 0; }
.quota th.last { text-align: left; padding-left: 19px; border-right: 0; }
.quota td.focus { box-shadow: inset 0 0 0 2px #3aa9d6; }
.result .fold { margin-left: 335px; }
.mark { position: absolute; border: 7px solid #fb3838; }
.mark-tree { left: 101px; top: 519px; width: 236px; height: 45px; }
.mark-row { left: 431px; top: 672px; width: 481px; height: 56px; }
.mark-dot { position: absolute; left: 782px; top: 689px; width: 9px; height: 7px; background: #fb3838; }
```
